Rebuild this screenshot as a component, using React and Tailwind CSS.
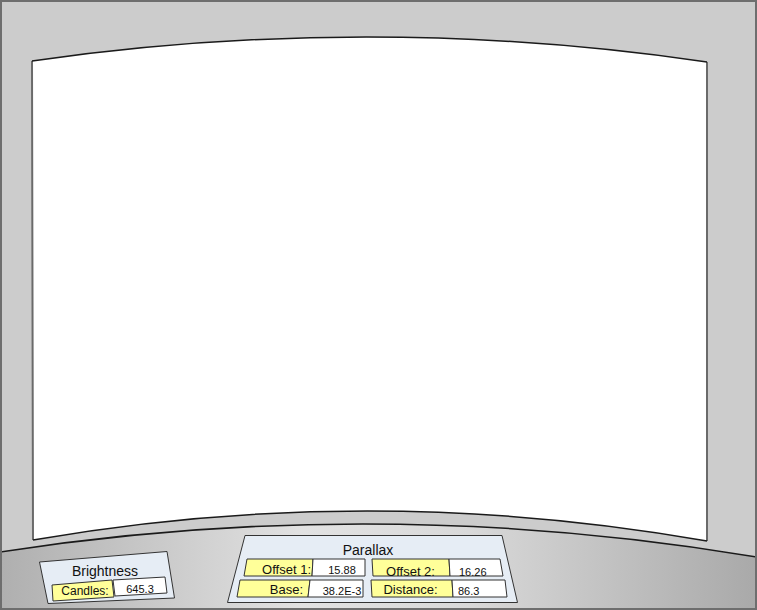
import React from "react";

const font = { fontFamily: '"Liberation Sans", Arial, sans-serif' };

const BrightnessPanel = () => {
  return (
    <div className="relative mt-[16px] ml-[37px] h-[53px] w-[136px] shrink-0">
      <svg className="absolute inset-0" width="136" height="53" viewBox="0 0 136 53">
        <polygon points="0.5,11 128,0.5 135.5,47 9,52.5" fill="#e6edf5" stroke="#333" strokeWidth="1" />
        <polygon points="13,34 73,29 75,46 14,50" fill="#ffff99" stroke="#333" strokeWidth="1" />
        <polygon points="74,29 126,26 128,42 76,45" fill="#fff" stroke="#333" strokeWidth="1" />
      </svg>
      <div className="relative flex flex-col pt-[11px] text-[#111]">
        <div className="ml-[-4px] h-[18px] text-center text-[14px] leading-[18px]">Brightness</div>
        <div className="mt-[2px] flex h-[18px] items-start">
          <span className="ml-[15px] w-[62px] text-center text-[12px] leading-[18px]">Candles:</span>
          <span className="w-[48px] text-center text-[11px] leading-[14px]">645.3</span>
        </div>
      </div>
    </div>
  );
};

const ParallaxPanel = () => {
  return (
    <div className="relative ml-[52px] h-[68px] w-[291px] shrink-0">
      <svg className="absolute inset-0" width="291" height="68" viewBox="0 0 291 68">
        <polygon points="18,0.5 275,0.5 290.5,67.5 0.5,67.5" fill="#e6edf5" stroke="#333" strokeWidth="1" />
        <polygon points="20,24 86,24 85,41 17,41" fill="#ffff99" stroke="#333" strokeWidth="1" />
        <polygon points="86,24 138,24 138,41 85,41" fill="#fff" stroke="#333" strokeWidth="1" />
        <polygon points="13,45 83,45 81,62 10,62" fill="#ffff99" stroke="#333" strokeWidth="1" />
        <polygon points="83,45 136,45 136,62 81,62" fill="#fff" stroke="#333" strokeWidth="1" />
        <polygon points="145,24 222,24 223,41 146,41" fill="#ffff99" stroke="#333" strokeWidth="1" />
        <polygon points="222,24 273,24 276,41 223,41" fill="#fff" stroke="#333" strokeWidth="1" />
        <polygon points="144,45 225,45 226,62 145,62" fill="#ffff99" stroke="#333" strokeWidth="1" />
        <polygon points="225,45 278,45 280,62 226,62" fill="#fff" stroke="#333" strokeWidth="1" />
      </svg>
      <div className="relative flex flex-col pt-[6px] text-[#111]">
        <div className="ml-[-9px] h-[18px] text-center text-[14px] leading-[18px]">Parallax</div>
        <div className="mt-[2px] flex h-[18px] items-start">
          <span className="ml-[16px] w-[69px] pr-[1px] text-right text-[13px] leading-[18px]">Offset 1:</span>
          <span className="w-[60px] text-center text-[11px] leading-[18px]">15.88</span>
          <span className="mt-[2px] w-[77px] text-center text-[13px] leading-[18px]">Offset 2:</span>
          <span className="mt-[2px] w-[54px] pl-[10px] text-[11px] leading-[18px]">16.26</span>
        </div>
        <div className="mt-[2px] flex h-[18px] items-start">
          <span className="ml-[16px] w-[69px] pr-[9px] text-right text-[13px] leading-[18px]">Base:</span>
          <span className="w-[60px] pt-[1px] text-center text-[11px] leading-[18px]">38.2E-3</span>
          <span className="w-[77px] text-center text-[13px] leading-[18px]">Distance:</span>
          <span className="w-[54px] pt-[1px] pl-[9px] text-[11px] leading-[18px]">86.3</span>
        </div>
      </div>
    </div>
  );
};

export default function App() {
  return (
    <div
      className="relative h-[610px] w-[757px] overflow-hidden border-2 border-[#6e6e6e] bg-[#cccccc]"
      style={font}
    >
      {/* curved screen and console drawing */}
      <svg className="absolute left-0 top-0" width="753" height="606" viewBox="2 2 753 606">
        <defs>
          <linearGradient id="console" x1="0" y1="0" x2="1" y2="0">
            <stop offset="0" stopColor="#afafaf" />
            <stop offset="0.4" stopColor="#e2e2e2" />
            <stop offset="0.62" stopColor="#d9d9d9" />
            <stop offset="1" stopColor="#a9a9a9" />
          </linearGradient>
        </defs>
        <path d="M32,61 Q370,12.5 707,62 L707,541 Q370,481.5 33,540 Z" fill="#fff" />
        <path d="M32,61 L33,540 M707,62 L707,541" stroke="#6a6a6a" strokeWidth="2" fill="none" />
        <path d="M32,61 Q370,12.5 707,62" stroke="#1a1a1a" strokeWidth="1.5" fill="none" />
        <path d="M33,540 Q370,481.5 707,541" stroke="#1a1a1a" strokeWidth="1.5" fill="none" />
        <path d="M0,552 Q378,493.5 757,557 L757,612 L0,612 Z" fill="url(#console)" />
        <path d="M0,552 Q378,493.5 757,557" stroke="#1a1a1a" strokeWidth="1.5" fill="none" />
      </svg>

      {/* control panels on the console */}
      <div className="absolute inset-x-0 top-[533px] flex h-[73px] items-start">
        <BrightnessPanel />
        <ParallaxPanel />
      </div>
    </div>
  );
}
